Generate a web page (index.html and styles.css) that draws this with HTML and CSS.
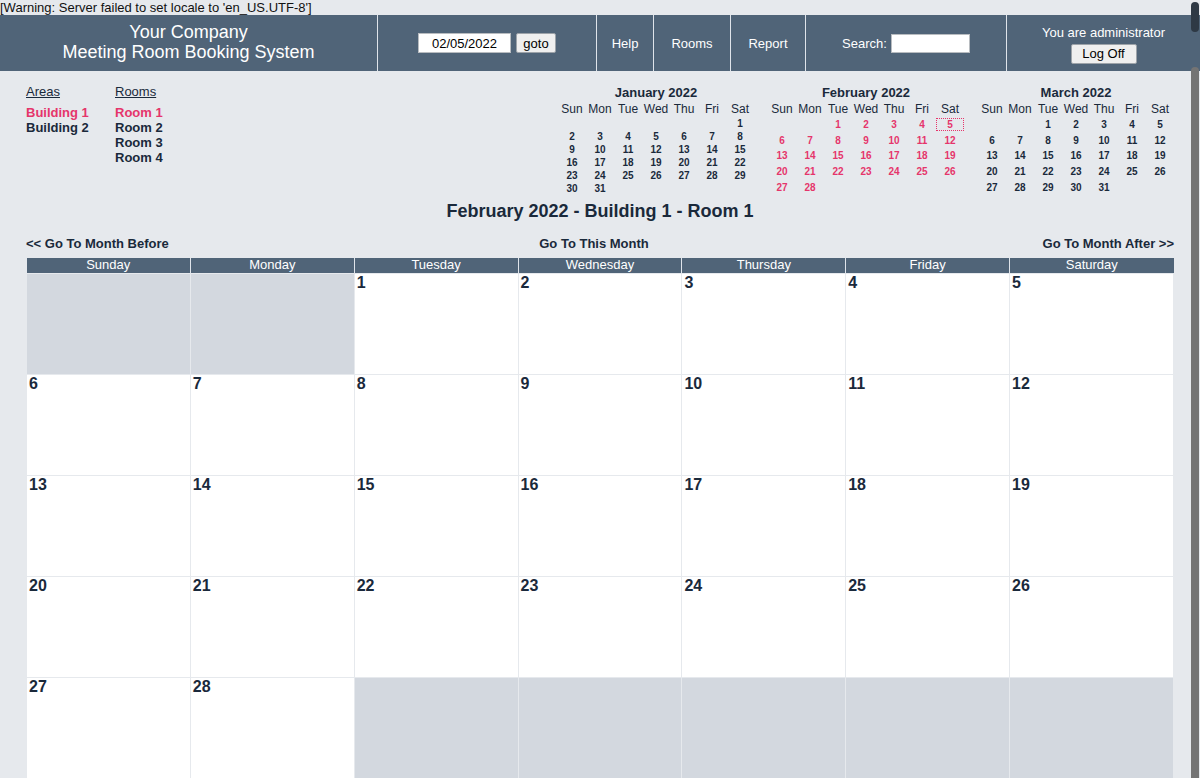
FILE: index.html
```html
<!DOCTYPE html>
<html lang="en">
<head>
    <meta charset="UTF-8">
    <title>Meeting Room Booking System</title>
    <link rel="stylesheet" href="styles.css">
</head>
<body>
<div class="warning">[Warning: Server failed to set locale to 'en_US.UTF-8']</div>
<div id="banner">
    <div class="company">
        <span>Your Company</span>
        <span>Meeting Room Booking System</span>
    </div>
    <div class="goto">
        <input type="text" class="date-input" value="02/05/2022">
        <button class="btn">goto</button>
    </div>
    <div class="link help">Help</div>
    <div class="link rooms">Rooms</div>
    <div class="link report">Report</div>
    <div class="search">
        <span>Search:</span>
        <input type="text" class="search-input">
    </div>
    <div class="user">
        <span>You are administrator</span>
        <button class="btn logoff">Log Off</button>
    </div>
</div>

<div id="top">
    <div class="lists">
        <div class="list areas">
            <div class="list-head">Areas</div>
            <div class="current">Building 1</div>
            <div>Building 2</div>
        </div>
        <div class="list">
            <div class="list-head">Rooms</div>
            <div class="current">Room 1</div>
            <div>Room 2</div>
            <div>Room 3</div>
            <div>Room 4</div>
        </div>
    </div>
    <div class="minicals">
        <table class="minical">
            <caption>January 2022</caption>
            <thead><tr><th>Sun</th><th>Mon</th><th>Tue</th><th>Wed</th><th>Thu</th><th>Fri</th><th>Sat</th></tr></thead>
            <tbody>
            <tr><td></td><td></td><td></td><td></td><td></td><td></td><td>1</td></tr>
            <tr><td>2</td><td>3</td><td>4</td><td>5</td><td>6</td><td>7</td><td>8</td></tr>
            <tr><td>9</td><td>10</td><td>11</td><td>12</td><td>13</td><td>14</td><td>15</td></tr>
            <tr><td>16</td><td>17</td><td>18</td><td>19</td><td>20</td><td>21</td><td>22</td></tr>
            <tr><td>23</td><td>24</td><td>25</td><td>26</td><td>27</td><td>28</td><td>29</td></tr>
            <tr><td>30</td><td>31</td><td></td><td></td><td></td><td></td><td></td></tr>
            </tbody>
        </table>
        <table class="minical minical-current">
            <caption>February 2022</caption>
            <thead><tr><th>Sun</th><th>Mon</th><th>Tue</th><th>Wed</th><th>Thu</th><th>Fri</th><th>Sat</th></tr></thead>
            <tbody>
            <tr><td></td><td></td><td>1</td><td>2</td><td>3</td><td>4</td><td><span class="today">5</span></td></tr>
            <tr><td>6</td><td>7</td><td>8</td><td>9</td><td>10</td><td>11</td><td>12</td></tr>
            <tr><td>13</td><td>14</td><td>15</td><td>16</td><td>17</td><td>18</td><td>19</td></tr>
            <tr><td>20</td><td>21</td><td>22</td><td>23</td><td>24</td><td>25</td><td>26</td></tr>
            <tr><td>27</td><td>28</td><td></td><td></td><td></td><td></td><td></td></tr>
            </tbody>
        </table>
        <table class="minical">
            <caption>March 2022</caption>
            <thead><tr><th>Sun</th><th>Mon</th><th>Tue</th><th>Wed</th><th>Thu</th><th>Fri</th><th>Sat</th></tr></thead>
            <tbody>
            <tr><td></td><td></td><td>1</td><td>2</td><td>3</td><td>4</td><td>5</td></tr>
            <tr><td>6</td><td>7</td><td>8</td><td>9</td><td>10</td><td>11</td><td>12</td></tr>
            <tr><td>13</td><td>14</td><td>15</td><td>16</td><td>17</td><td>18</td><td>19</td></tr>
            <tr><td>20</td><td>21</td><td>22</td><td>23</td><td>24</td><td>25</td><td>26</td></tr>
            <tr><td>27</td><td>28</td><td>29</td><td>30</td><td>31</td><td></td><td></td></tr>
            </tbody>
        </table>
    </div>
</div>

<h2 class="title">February 2022 - Building 1 - Room 1</h2>

<div class="month-nav">
    <span class="prev">&lt;&lt; Go To Month Before</span>
    <span class="this">Go To This Month</span>
    <span class="next">Go To Month After &gt;&gt;</span>
</div>

<table id="month">
    <thead>
    <tr><th>Sunday</th><th>Monday</th><th>Tuesday</th><th>Wednesday</th><th>Thursday</th><th>Friday</th><th>Saturday</th></tr>
    </thead>
    <tbody>
    <tr>
        <td class="empty"></td><td class="empty"></td>
        <td><span class="day">1</span></td><td><span class="day">2</span></td><td><span class="day">3</span></td><td><span class="day">4</span></td><td><span class="day">5</span></td>
    </tr>
    <tr>
        <td><span class="day">6</span></td><td><span class="day">7</span></td><td><span class="day">8</span></td><td><span class="day">9</span></td><td><span class="day">10</span></td><td><span class="day">11</span></td><td><span class="day">12</span></td>
    </tr>
    <tr>
        <td><span class="day">13</span></td><td><span class="day">14</span></td><td><span class="day">15</span></td><td><span class="day">16</span></td><td><span class="day">17</span></td><td><span class="day">18</span></td><td><span class="day">19</span></td>
    </tr>
    <tr>
        <td><span class="day">20</span></td><td><span class="day">21</span></td><td><span class="day">22</span></td><td><span class="day">23</span></td><td><span class="day">24</span></td><td><span class="day">25</span></td><td><span class="day">26</span></td>
    </tr>
    <tr>
        <td><span class="day">27</span></td><td><span class="day">28</span></td>
        <td class="empty"></td><td class="empty"></td><td class="empty"></td><td class="empty"></td><td class="empty"></td>
    </tr>
    </tbody>
</table>

<div class="scroll-thumb"></div>
<div class="scroll-track"></div>
</body>
</html>
```

FILE: styles.css
```css
*{
    margin: 0;
    padding: 0;
    box-sizing: border-box;
}
html{
    overflow: hidden;
}
body{
    background-color: #e6e9ed;
    font-family: "Liberation Sans", Arial, sans-serif;
    color: #1a293b;
}
.warning{
    font-size: 13px;
    line-height: 15px;
    height: 15px;
    color: #111;
}
#banner{
    display: flex;
    height: 56px;
    background-color: #506478;
    color: #fff;
    font-size: 13px;
}
#banner > div{
    display: flex;
    align-items: center;
    justify-content: center;
    border-left: 1px solid #dfe4ea;
}
#banner .company{
    width: 377px;
    border-left: none;
    flex-direction: column;
    font-size: 18px;
    line-height: 20px;
    padding-bottom: 2px;
}
#banner .goto{
    width: 219px;
}
#banner .help{
    width: 57px;
}
#banner .rooms{
    width: 77px;
}
#banner .report{
    width: 75px;
}
#banner .search{
    width: 201px;
}
#banner .user{
    flex: 1;
    flex-direction: column;
    padding-top: 2px;
}
.date-input{
    width: 93px;
    height: 20px;
    border: 1px solid #b8bcc0;
    background: #fff;
    font-family: inherit;
    font-size: 13px;
    text-align: center;
    color: #000;
}
.btn{
    height: 20px;
    padding: 0 6px;
    border: 1px solid #9da3a9;
    border-radius: 2px;
    background-color: #efefef;
    font-family: inherit;
    font-size: 13px;
    color: #000;
}
.goto .btn{
    width: 40px;
    margin-left: 5px;
}
.search-input{
    width: 79px;
    height: 19px;
    margin-left: 4px;
    border: 1px solid #b8bcc0;
    background: #fff;
}
.user .logoff{
    width: 66px;
    margin-top: 4px;
}
#top{
    display: flex;
    justify-content: space-between;
    align-items: flex-start;
    padding: 0 26px;
    margin-top: 12px;
}
.lists{
    display: flex;
    font-size: 13px;
    line-height: 15px;
    font-weight: bold;
    padding-top: 1px;
}
.lists .areas{
    width: 89px;
}
.list-head{
    font-weight: normal;
    text-decoration: underline;
    margin-bottom: 6px;
}
.current{
    color: #e5356b;
}
.minicals{
    display: flex;
    gap: 14px;
    padding-top: 2px;
}
.minical{
    width: 196px;
    border-collapse: collapse;
    table-layout: fixed;
}
.minical caption{
    font-size: 13px;
    line-height: 15px;
    font-weight: bold;
}
.minical th{
    width: 28px;
    height: 17px;
    font-size: 12px;
    font-weight: normal;
    text-align: center;
}
.minical td{
    height: 13px;
    font-size: 10px;
    line-height: 13px;
    font-weight: bold;
    text-align: center;
}
.minical-current td{
    color: #e5356b;
}
.minical .today{
    display: inline-block;
    width: 28px;
    border: 1px dotted #e5356b;
    line-height: 11px;
}
.title{
    margin-top: 6px;
    font-size: 18px;
    line-height: 20px;
    text-align: center;
}
.month-nav{
    display: flex;
    margin: 15px 26px 0;
    font-size: 13px;
    line-height: 15px;
    font-weight: bold;
}
.month-nav span{
    flex: 1;
}
.month-nav .this{
    text-align: center;
    padding-right: 12px;
}
.month-nav .next{
    text-align: right;
}
#month{
    width: 1148px;
    margin: 7px 26px 0;
    border-collapse: collapse;
    table-layout: fixed;
}
#month th{
    height: 15px;
    background-color: #506478;
    color: #fff;
    font-size: 13px;
    line-height: 14px;
    font-weight: normal;
    border-left: 1px solid #dfe4ea;
}
#month th:first-child{
    border-left: none;
}
#month td{
    height: 101px;
    vertical-align: top;
    background-color: #fff;
    border: 1px solid #e6e9ed;
}
#month td.empty{
    background-color: #d3d8df;
}
#month .day{
    display: block;
    padding: 0 2px;
    font-size: 16px;
    line-height: 18px;
    font-weight: bold;
}
.scroll-thumb{
    position: fixed;
    top: 2px;
    right: 1px;
    width: 8px;
    height: 30px;
    border-radius: 4px;
    background-color: #2e3945;
}
.scroll-track{
    position: fixed;
    top: 67px;
    right: 1px;
    bottom: 0;
    width: 8px;
    border-radius: 4px 4px 0 0;
    background-color: #747474;
}
```
